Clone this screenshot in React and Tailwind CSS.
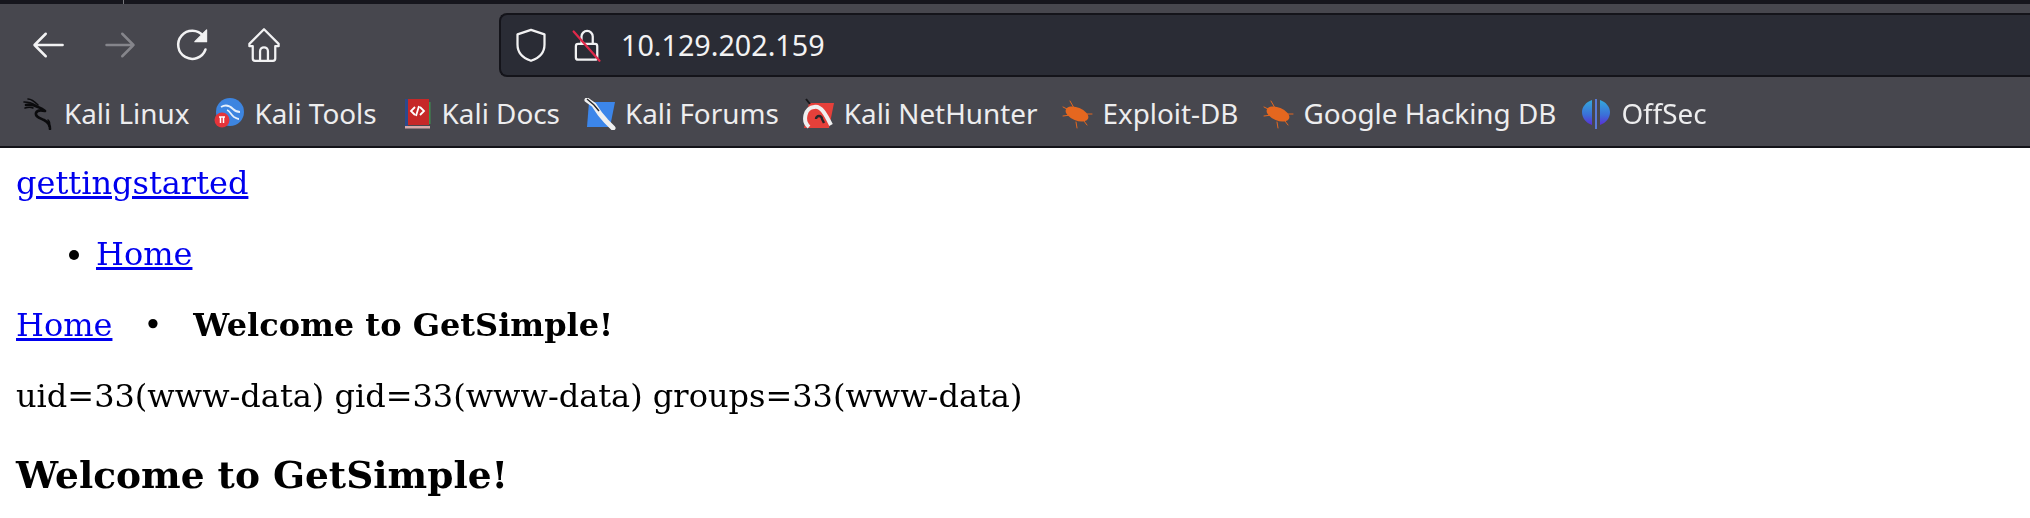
import React from "react";

const Stroke = ({ children, className = "", color = "#f2f2f3", w = 2.2 }) => (
  <svg viewBox="0 0 32 32" fill="none" stroke={color} strokeWidth={w} strokeLinecap="round" strokeLinejoin="round" className={"w-9 h-9 " + className}>
    {children}
  </svg>
);

const Back = () => <Stroke><path d="M5 16h24M14 6 4 16l10 10" /></Stroke>;
const Forward = () => <Stroke color="#85858b"><path d="M4 16h24M18 6l10 10-10 10" /></Stroke>;
const Reload = () => (
  <Stroke>
    <path d="M28 20a12.500 12.500 0 1 1-2-12" />
    <path d="M29 2.500v10.500h-10.500z" fill="#f2f2f3" strokeWidth="1" />
  </Stroke>
);
const HomeIcon = () => (
  <Stroke w="2">
    <path d="M16 2 3 15v2h3v11a2 2 0 0 0 2 2h16a2 2 0 0 0 2-2V17h3v-2z" />
    <path d="M12.500 30v-8.500a3.500 3.500 0 0 1 7 0V30" />
  </Stroke>
);
const Shield = () => (
  <Stroke w="2">
    <path d="M16 2.500 4 6.500v9c0 8 6 12.500 12 14.500 6-2 12-6.500 12-14.500v-9z" />
  </Stroke>
);
const Lock = () => (
  <svg viewBox="0 0 32 32" fill="none" strokeWidth="2" strokeLinecap="round" strokeLinejoin="round" className="w-9 h-9">
    <path stroke="#f2f2f3" d="M12 14V8.500a5 5 0 0 1 10 0V15M7 17a2 2 0 0 1 2-2h15a2 2 0 0 1 2 2v10a2 2 0 0 1-2 2H9a2 2 0 0 1-2-2z" />
    <path stroke="#e0284a" d="M5 4 28 30" />
  </svg>
);

const Dragon = () => (
  <svg viewBox="0 0 32 32" fill="none" stroke="#0b0b0d" strokeLinecap="round" strokeLinejoin="round" className="w-8 h-8">
    <path strokeWidth="2.600" d="M3 7c4-1 8 0 12 2 3 1 6 3 7 4-4-1-8-1-9 2-1 4 4 5 8 7 4 2 6 5 6 9" />
    <path strokeWidth="1.600" d="M5 1c4 0 7 3 10 6M1 4c4 0 8 1 11 3M2 10c3-1 6-1 8 0M25 22c2 2 2 4 1 6" />
  </svg>
);
const KaliTools = () => (
  <svg viewBox="0 0 32 32" className="w-8 h-8">
    <circle cx="17" cy="14" r="14" fill="#3d85e0" />
    <path d="M8 9c5-3 9-1 12 2 2 2 4 3 7 3M14 12c3 1 4 5 7 7 2 1 3 2 5 2" fill="none" stroke="#e6f0fb" strokeWidth="1.800" />
    <circle cx="9" cy="22" r="7.500" fill="#e5343a" />
    <path d="M6 19h6M7.500 19v6M10.500 19v6" stroke="#fff" strokeWidth="1.500" />
  </svg>
);
const KaliDocs = () => (
  <svg viewBox="0 0 32 32" className="w-8 h-8">
    <rect x="4" y="1" width="3" height="27" fill="#2b4a8c" />
    <rect x="7" y="1" width="21" height="26" fill="#c62828" />
    <rect x="28" y="4" width="1.500" height="22" fill="#3f8f4f" />
    <path d="M14 9l-4 4 4 4M19 9l4 4-4 4M18 8l-3 10" fill="none" stroke="#fff" strokeWidth="1.800" />
    <rect x="4" y="28" width="25" height="2.500" fill="#d8a9a9" />
  </svg>
);
const KaliForums = () => (
  <svg viewBox="0 0 32 32" className="w-8 h-8">
    <path d="M5 4h26l-5 25H3z" fill="#3c86ea" />
    <path d="M3 2l7 5 6 9 6 7 7 7" fill="none" stroke="#f0f0f0" strokeWidth="5" strokeLinecap="round" />
    <path d="M3 1l7 6 5 6" fill="none" stroke="#26262a" strokeWidth="1.400" />
  </svg>
);
const NetHunter = () => (
  <svg viewBox="0 0 32 32" className="w-8 h-8">
    <path d="M6 5h25l-5 25H1z" fill="#e5403a" />
    <path d="M6 29a9 11 0 0 1 5-20c7-2 12 8 17 18" fill="none" stroke="#f0f0f0" strokeWidth="4" />
    <path d="M13 21a3 3 0 0 1 6 0l2 4" fill="none" stroke="#27272b" strokeWidth="2.400" />
    <path d="M3 1l4 5" stroke="#17171a" strokeWidth="2" />
  </svg>
);
const Bug = () => (
  <svg viewBox="0 0 32 32" className="w-8 h-8">
    <ellipse cx="16" cy="16" rx="12" ry="6.500" fill="#e5671f" transform="rotate(22 16 16)" />
    <path d="M2 9l8 4M9 3l4 7M2 18l8-1M15 24l1 6M23 23l3 4M26 16l5 0" stroke="#e5671f" strokeWidth="1" strokeLinecap="round" />
  </svg>
);
const OffSec = () => (
  <svg viewBox="0 0 32 32" className="w-8 h-8">
    <defs>
      <linearGradient id="off" x1="0" y1="0" x2="0" y2="1">
        <stop offset="0" stopColor="#35a9dc" />
        <stop offset="0.600" stopColor="#3b6fd8" />
        <stop offset="1" stopColor="#5a2fd6" />
      </linearGradient>
    </defs>
    <path d="M12 2C6 4 2 9 2 14c0 6 4 11 10 13zM20 2c6 2 10 7 10 12 0 6-4 11-10 13z" fill="url(#off)" />
    <path d="M16 1v30" stroke="#5a7ad8" strokeWidth="2" />
  </svg>
);

const bookmarks = [
  ["Kali Linux", Dragon],
  ["Kali Tools", KaliTools],
  ["Kali Docs", KaliDocs],
  ["Kali Forums", KaliForums],
  ["Kali NetHunter", NetHunter],
  ["Exploit-DB", Bug],
  ["Google Hacking DB", Bug],
  ["OffSec", OffSec],
];

export default function App() {
  return (
    <div className="w-[2030px] h-[518px] overflow-hidden bg-white">
      <div className="blur-[0.6px]">
        <div className="h-[4px] bg-[#16161d] flex">
          <div className="ml-[123px] w-px bg-[#77777c]" />
        </div>
        <div className="bg-[#47474e] h-[144px] border-b-2 border-[#131318]">
          <div className="h-[72px] pt-[9px] pl-[30px] flex items-stretch">
            <div className="flex items-center gap-[36px] w-[469px]">
              <Back />
              <Forward />
              <Reload />
              <HomeIcon />
            </div>
            <div className="flex-1 h-[64px] bg-[#2a2c35] border-2 border-r-0 border-[#14141a] rounded-l-lg flex items-center pl-[12px]">
              <Shield />
              <div className="ml-[19px]"><Lock /></div>
              <span className="ml-[17px] text-[#f2f2f3] text-[28.700px] leading-none" style={{ fontFamily: "'Noto Sans', sans-serif" }}>10.129.202.159</span>
            </div>
          </div>
          <div className="h-[70px] pl-[23px] pt-[6px] flex items-center gap-[24px]">
            {bookmarks.map(([label, Icon]) => (
              <div key={label} className="flex items-center gap-[9px]">
                <Icon />
                <span className="text-[#ededee] text-[27.850px] leading-none whitespace-nowrap" style={{ fontFamily: "'Noto Sans', sans-serif" }}>{label}</span>
              </div>
            ))}
          </div>
        </div>
        <div className="pl-[16px] pt-[15px] text-black text-[32px] leading-[40px]" style={{ fontFamily: "'DejaVu Serif', serif" }}>
          <a href="#" className="text-[#0000ee] underline">gettingstarted</a>
          <ul className="list-disc pl-[80px] mt-[31px]">
            <li><a href="#" className="text-[#0000ee] underline">Home</a></li>
          </ul>
          <p className="mt-[31px]">
            <a href="#" className="text-[#0000ee] underline">Home</a>
            <span className="mx-[31px]">•</span>
            <strong className="font-bold">Welcome to GetSimple!</strong>
          </p>
          <p className="mt-[31px]">uid=33(www-data) gid=33(www-data) groups=33(www-data)</p>
          <h2 className="mt-[36px] text-[37.500px] leading-[46px] font-bold">Welcome to GetSimple!</h2>
        </div>
      </div>
    </div>
  );
}
